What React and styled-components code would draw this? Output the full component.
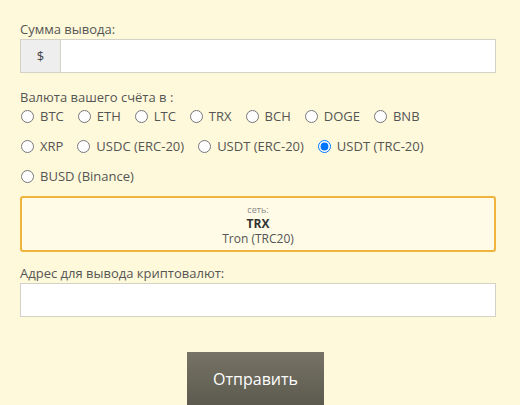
import styled, { createGlobalStyle } from "styled-components";
import { useState } from "react";

const currencies = [
  "BTC", "ETH", "LTC", "TRX", "BCH", "DOGE", "BNB",
  "XRP", "USDC (ERC-20)", "USDT (ERC-20)", "USDT (TRC-20)",
  "BUSD (Binance)",
];

export default function App() {
  const [selected, setSelected] = useState("USDT (TRC-20)");

  return (
    <>
      <Global />
      <Form onSubmit={(e) => e.preventDefault()}>
        <Label>Сумма вывода:</Label>
        <InputGroup>
          <Addon>$</Addon>
          <Field type="text" />
        </InputGroup>

        <Label $top={15}>Валюта вашего счёта в :</Label>
        <RadioList>
          {currencies.map((c) => (
            <RadioItem key={c}>
              <input
                type="radio"
                name="currency"
                checked={selected === c}
                onChange={() => setSelected(c)}
              />
              <span>{c}</span>
            </RadioItem>
          ))}
        </RadioList>

        <NetworkBox>
          <small>сеть:</small>
          <strong>TRX</strong>
          <span>Tron (TRC20)</span>
        </NetworkBox>

        <Label $top={12}>Адрес для вывода криптовалют:</Label>
        <Field type="text" $block />

        <Actions>
          <SubmitBtn type="submit">Отправить</SubmitBtn>
        </Actions>
      </Form>
    </>
  );
}

const Global = createGlobalStyle`
  html, body { margin: 0; padding: 0; }
  body {
    background: #fef9da;
    font-family: "Open Sans", "Liberation Sans", sans-serif;
    color: #555;
  }
`;

const Form = styled.form`
  width: 476px;
  padding: 20px 0 0 20px;
  display: flex;
  flex-direction: column;
`;

const Label = styled.label`
  display: block;
  font-size: 13px;
  line-height: 19px;
  color: #555;
  margin-top: ${({ $top }) => $top || 0}px;
`;

const InputGroup = styled.div`
  display: flex;
  height: 34px;
  box-sizing: border-box;
  border: 1px solid #d4d2c8;
  background: #fff;
`;

const Addon = styled.span`
  width: 39px;
  flex: none;
  display: flex;
  align-items: center;
  justify-content: center;
  background: #eeeeee;
  border-right: 1px solid #d4d2c8;
  font-size: 13px;
  color: #444;
`;

const Field = styled.input`
  flex: ${({ $block }) => ($block ? "none" : "1")};
  min-width: 0;
  box-sizing: border-box;
  border: ${({ $block }) => ($block ? "1px solid #d4d2c8" : "none")};
  height: ${({ $block }) => ($block ? "34px" : "auto")};
  width: ${({ $block }) => ($block ? "476px" : "auto")};
  background: #fff;
  outline: none;
  font-family: inherit;
  font-size: 13px;
  padding: 0 10px;
`;

const RadioList = styled.div`
  display: flex;
  flex-wrap: wrap;
  row-gap: 10px;
  column-gap: 13px;
  margin-top: -1px;
  width: 420px;
`;

const RadioItem = styled.label`
  display: flex;
  align-items: center;
  height: 20px;
  font-size: 13px;
  color: #555;
  cursor: pointer;

  input {
    width: 13px;
    height: 13px;
    margin: 0 6px 0 1px;
  }
`;

const NetworkBox = styled.div`
  margin-top: 10px;
  height: 56px;
  box-sizing: border-box;
  border: 2px solid #f0b43c;
  border-radius: 3px;
  background: #fffbe6;
  display: flex;
  flex-direction: column;
  align-items: center;
  justify-content: center;

  small {
    font-size: 9px;
    line-height: 13px;
    color: #888;
  }
  strong {
    font-size: 12px;
    line-height: 15px;
    color: #333;
    font-weight: 700;
  }
  span {
    font-size: 12px;
    line-height: 15px;
    color: #555;
  }
`;

const Actions = styled.div`
  display: flex;
  justify-content: center;
  margin-top: 35px;
  padding-right: 5px;
`;

const SubmitBtn = styled.button`
  width: 137px;
  height: 54px;
  border: none;
  border-radius: 0;
  background: linear-gradient(#777366, #5c594e);
  color: #fff;
  font-family: "Open Sans", "Liberation Sans", sans-serif;
  font-size: 16px;
  font-weight: 500;
  padding-bottom: 2px;
  cursor: pointer;
`;
